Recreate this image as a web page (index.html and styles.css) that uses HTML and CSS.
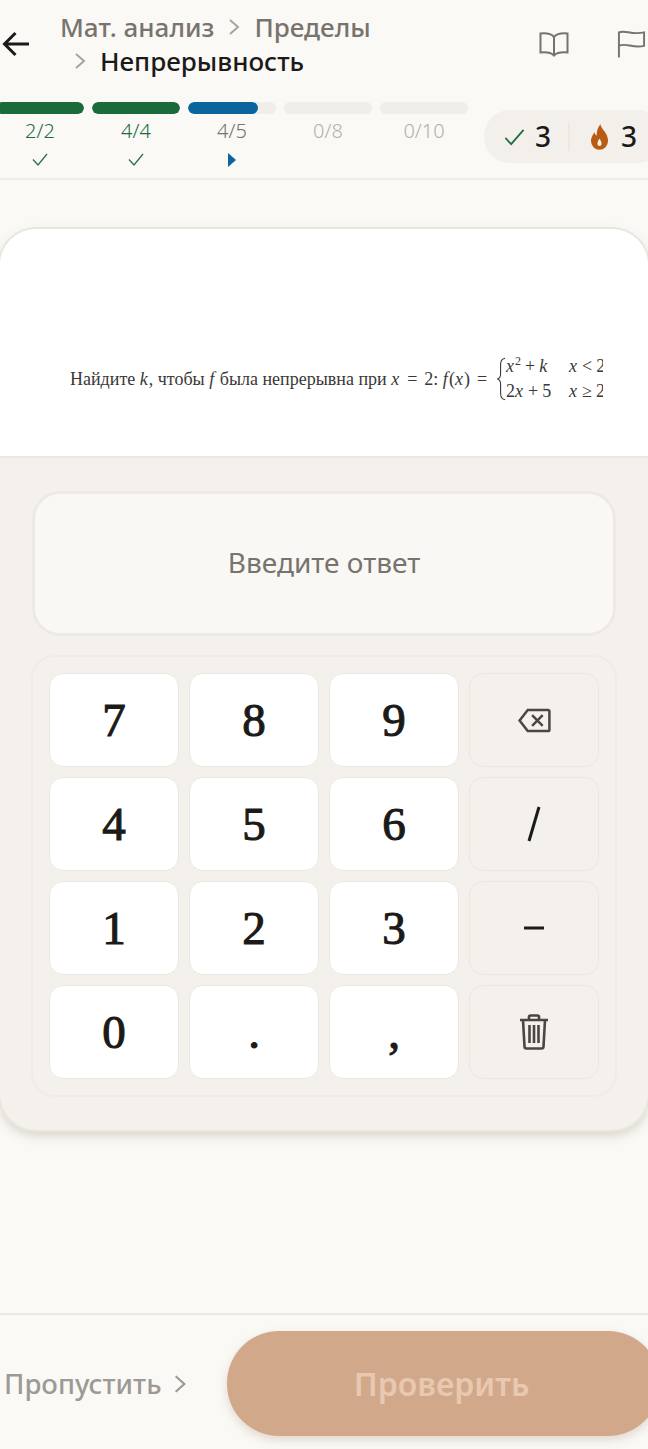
FILE: index.html
```html
<!DOCTYPE html>
<html lang="ru">
<head>
    <meta charset="UTF-8">
    <meta name="viewport" content="width=device-width, initial-scale=1.0">
    <title>Непрерывность</title>
    <link rel="stylesheet" href="styles.css">
</head>
<body>
    <header class="topbar">
        <div class="title-row">
            <svg class="back-icon" viewBox="0 0 28 26"><path d="M27 13H3M13.5 2 2.500 13l11 11"/></svg>
            <div class="crumbs">
                <div class="crumb-line">
                    <span>Мат. анализ</span>
                    <svg class="crumb-sep" viewBox="0 0 12 18"><path d="m2 2 8 7-8 7"/></svg>
                    <span>Пределы</span>
                </div>
                <div class="crumb-line crumb-current">
                    <svg class="crumb-sep" viewBox="0 0 12 18"><path d="m2 2 8 7-8 7"/></svg>
                    <span>Непрерывность</span>
                </div>
            </div>
            <svg class="book-icon" viewBox="0 0 30 26"><path d="M15 6C12 2.500 7 2 1.500 2.500v19C7 21 12 21.500 15 24.500 18 21.500 23 21 28.500 21.500v-19C23 2 18 2.500 15 6Zm0 0v18.500"/></svg>
            <svg class="flag-icon" viewBox="0 0 30 30"><path d="M2 29V3C9 0 14 6 28 3v14C16 20 9 13 2 17"/></svg>
        </div>

        <div class="progress-row">
            <div class="stage stage-done">
                <div class="bar"><div class="bar-fill"></div></div>
                <div class="stage-count">2/2</div>
                <svg class="stage-mark" viewBox="0 0 16 13"><path d="m1 6.500 5 5.500 9-11"/></svg>
            </div>
            <div class="stage stage-done">
                <div class="bar"><div class="bar-fill"></div></div>
                <div class="stage-count">4/4</div>
                <svg class="stage-mark" viewBox="0 0 16 13"><path d="m1 6.500 5 5.500 9-11"/></svg>
            </div>
            <div class="stage stage-active">
                <div class="bar"><div class="bar-fill" style="width: 80%"></div></div>
                <div class="stage-count">4/5</div>
                <svg class="stage-play" viewBox="0 0 10 14"><path d="M1 0 9 7 1 14Z"/></svg>
            </div>
            <div class="stage">
                <div class="bar"></div>
                <div class="stage-count">0/8</div>
            </div>
            <div class="stage">
                <div class="bar"></div>
                <div class="stage-count">0/10</div>
            </div>
            <div class="score-pill">
                <svg class="score-check" viewBox="0 0 22 18"><path d="m1.500 10 6 6.500L20.500 1.500"/></svg>
                <span class="score-num">3</span>
                <span class="score-sep"></span>
                <svg class="flame" viewBox="0 0 20 27"><path fill-rule="evenodd" d="M11 0c.5 5 8 9 8 17.500a9 9.500 0 0 1-18 0C1 14 3 11 5 8.500c0 2 .8 3 2 3.500C7 8 8 3 11 0ZM10 15c-1 2-2.200 3.500-2.200 5.500a2.200 2.500 0 0 0 4.400 0c0-2-1.200-3.500-2.200-5.500Z"/></svg>
                <span class="score-num">3</span>
            </div>
        </div>
    </header>

    <main class="card">
        <section class="question">
            <div class="question-clip">
                <span>Найдите <i>k</i>, чтобы <i>f</i> была непрерывна при <i>x</i><span class="rel">=</span>2: <i>f</i>(<i>x</i>)<span class="rel">=</span></span>
                <svg class="brace" viewBox="0 0 12 52"><path d="M11 1C6 2 5.500 5 5.500 10v10C5.500 23 4 25.500 1.500 26 4 26.500 5.500 29 5.500 32v10c0 5 .5 8 5.500 9"/></svg>
                <div class="cases">
                    <div class="case-row"><span class="case-left"><i>x</i><sup>2</sup><span class="rel">+</span><i>k</i></span><span><i>x</i><span class="rel">&lt;</span>2</span></div>
                    <div class="case-row"><span class="case-left">2<i>x</i><span class="rel">+</span>5</span><span><i>x</i><span class="rel">≥</span>2</span></div>
                </div>
            </div>
        </section>

        <section class="answer-area">
            <div class="answer-box"><span class="answer-hint">Введите ответ</span></div>
            <div class="keypad">
                <button class="key">7</button>
                <button class="key">8</button>
                <button class="key">9</button>
                <button class="key key-side">
                    <svg class="side-icon" width="33" height="25" viewBox="0 0 34 26"><path d="M10 2h21a1.500 1.500 0 0 1 1.500 1.500v19A1.500 1.500 0 0 1 31 24H10L1.500 13ZM14.500 7.500l11 11m0-11-11 11"/></svg>
                </button>
                <button class="key">4</button>
                <button class="key">5</button>
                <button class="key">6</button>
                <button class="key key-side">
                    <svg class="side-glyph" width="14" height="36" viewBox="0 0 14 36"><path d="M12 1 2 35"/></svg>
                </button>
                <button class="key">1</button>
                <button class="key">2</button>
                <button class="key">3</button>
                <button class="key key-side">
                    <svg class="side-glyph" width="20" height="4" viewBox="0 0 20 4"><path d="M0 2h20"/></svg>
                </button>
                <button class="key">0</button>
                <button class="key">.</button>
                <button class="key">,</button>
                <button class="key key-side">
                    <svg class="side-icon" width="30" height="36" viewBox="0 0 30 36"><path d="M1 6h28M10 6V3a1.500 1.500 0 0 1 1.500-1.500h7A1.500 1.500 0 0 1 20 3v3M4 6l1.500 26.500A2 2 0 0 0 7.500 34.500h15a2 2 0 0 0 2-2L26 6M10.500 11v18M15 11v18M19.500 11v18"/></svg>
                </button>
            </div>
        </section>
    </main>

    <footer class="bottombar">
        <div class="skip">
            <span>Пропустить</span>
            <svg class="skip-icon" viewBox="0 0 14 22"><path d="m2 2 10 9-10 9"/></svg>
        </div>
        <button class="check-btn">Проверить</button>
    </footer>
</body>
</html>
```

FILE: styles.css
```css
body {
    margin: 0;
    width: 648px;
    height: 1449px;
    overflow: hidden;
    background: #faf9f6;
    font-family: 'Noto Sans', Roboto, sans-serif;
    color: #1c1a18;
}
svg {
    display: block;
    fill: none;
    stroke: currentColor;
    flex-shrink: 0;
}

/* header */
.topbar {
    height: 178px;
    border-bottom: 2px solid #f0ede8;
}
.title-row {
    height: 102px;
    display: flex;
    align-items: flex-start;
}
.back-icon {
    width: 28px;
    height: 26px;
    margin: 31px 0 0 2px;
    stroke: #1c1a18;
    stroke-width: 3;
}
.crumbs {
    margin: 10px 0 0 30px;
    width: 482px;
    font-size: 26px;
    line-height: 34px;
    font-weight: 500;
    color: #78736c;
}
.crumb-line {
    display: flex;
    align-items: center;
    gap: 14px;
}
.crumb-current {
    padding-left: 14px;
    color: #1c1a18;
}
.crumb-sep {
    width: 12px;
    height: 18px;
    stroke: #a8a49d;
    stroke-width: 2;
}
.book-icon {
    width: 30px;
    height: 26px;
    margin: 31px 0 0 -3px;
    stroke: #78736c;
    stroke-width: 2;
}
.flag-icon {
    width: 29px;
    height: 30px;
    margin: 29px 0 0 48px;
    stroke: #78736c;
    stroke-width: 2;
}

/* progress */
.progress-row {
    display: flex;
    gap: 8px;
    margin-left: -4px;
    width: 700px;
}
.stage {
    width: 88px;
    font-size: 20px;
    font-weight: 300;
    line-height: 26px;
    text-align: center;
    color: #b3afa8;
}
.bar {
    height: 12px;
    border-radius: 6px;
    background: #f1eeea;
    margin-bottom: 4px;
    overflow: hidden;
}
.bar-fill {
    height: 100%;
    border-radius: 6px;
    background: #1a6a3c;
}
.stage-count {
    height: 26px;
}
.stage-done {
    color: #1f6b40;
}
.stage-active {
    color: #78736c;
}
.stage-active .bar-fill {
    background: #0a659f;
}
.stage-mark {
    width: 16px;
    height: 13px;
    margin: 9px auto 0;
    stroke: #2b7048;
    stroke-width: 1.3;
}
.stage-play {
    width: 10px;
    height: 14px;
    margin: 9px auto 0;
    fill: #0a659f;
    stroke: none;
}
.score-pill {
    width: 180px;
    height: 53px;
    margin: 8px 0 0 8px;
    padding-left: 20px;
    box-sizing: border-box;
    border-radius: 26px;
    background: #f3f0ec;
    display: flex;
    align-items: center;
}
.score-check {
    width: 21px;
    height: 18px;
    stroke: #1f6b40;
    stroke-width: 1.8;
    margin-right: 10px;
}
.score-num {
    font-size: 28px;
    font-weight: 500;
    line-height: 53px;
}
.score-sep {
    width: 2px;
    height: 28px;
    background: #ebe7e1;
    margin: 0 20px 0 17px;
}
.flame {
    width: 19px;
    height: 26px;
    fill: #b85c12;
    stroke: none;
    margin-right: 12px;
}

/* card */
.card {
    margin: 49px 0 0;
    height: 901px;
    border-radius: 36px;
    box-shadow: 0 0 0 2px #e8e6e0, 0 5px 12px rgba(120, 105, 60, 0.28);
    background: #f4f1ec;
    overflow: hidden;
}
.question {
    height: 229px;
    background: #fff;
    border-bottom: 2px solid #ebe8e3;
    box-sizing: border-box;
    padding: 120px 45px 0 70px;
}
.question-clip {
    display: flex;
    align-items: center;
    overflow: hidden;
    height: 60px;
    font-family: 'Liberation Serif', serif;
    font-size: 18px;
    color: #3a3835;
    white-space: nowrap;
}
.question-clip i {
    letter-spacing: 1px;
}
.rel {
    padding: 0 7px;
}
.brace {
    width: 10px;
    height: 52px;
    margin-left: 2px;
    stroke: #3a3835;
    stroke-width: 1.3;
}
.cases {
    line-height: 25px;
}
.cases .rel {
    padding: 0 4px;
}
.case-row {
    display: flex;
}
.case-left {
    width: 63px;
}
.cases sup {
    font-size: 12px;
    line-height: 0;
}

/* answer */
.answer-area {
    padding: 33px 31px 0;
}
.answer-box {
    height: 145px;
    box-sizing: border-box;
    margin: 0 1px;
    border: 3px solid #eee9e3;
    border-radius: 28px;
    background: #faf8f5;
    color: #78736c;
    font-size: 28px;
    display: flex;
    align-items: center;
    justify-content: center;
}
.answer-hint {
    margin-bottom: 4px;
}
.keypad {
    margin-top: 19px;
    height: 442px;
    box-sizing: border-box;
    padding: 16px;
    border: 2px solid #efebe6;
    border-radius: 24px;
    display: grid;
    grid-template-columns: repeat(4, 130px);
    grid-template-rows: repeat(4, 94px);
    gap: 10px;
}
.key {
    margin: 0;
    padding: 0;
    border: 1px solid #ebe7e1;
    border-radius: 14px;
    background: #fff;
    color: #1c1a18;
    font-family: 'Liberation Serif', serif;
    font-size: 47px;
    font-weight: 400;
    -webkit-text-stroke: 1.1px #1c1a18;
    display: flex;
    align-items: center;
    justify-content: center;
}
.key-side {
    background: #f4f1ec;
}
.side-icon {
    stroke: #4a4641;
    stroke-width: 2.6;
}
.side-glyph {
    stroke: #1c1a18;
    stroke-width: 3;
}

/* footer */
.bottombar {
    margin-top: 183px;
    height: 134px;
    border-top: 2px solid #ebe8e3;
    display: flex;
    align-items: flex-start;
    padding-left: 4px;
    width: 660px;
    box-sizing: border-box;
}
.skip {
    margin-top: 16px;
    height: 105px;
    width: 223px;
    display: flex;
    align-items: center;
    gap: 12px;
    font-size: 27.500px;
    font-weight: 500;
    color: #9d9a94;
}
.skip-icon {
    width: 12px;
    height: 20px;
    stroke: #9d9a94;
    stroke-width: 2.5;
}
.check-btn {
    margin: 16px 0 0;
    padding: 0 4px 0 0;
    width: 433px;
    height: 105px;
    border: none;
    border-radius: 52px;
    background: #d1a98a;
    box-shadow: 0 4px 10px rgba(160, 120, 90, 0.25);
    color: #e8c8b0;
    font-family: 'Noto Sans', Roboto, sans-serif;
    font-size: 32px;
    font-weight: 600;
}
```
